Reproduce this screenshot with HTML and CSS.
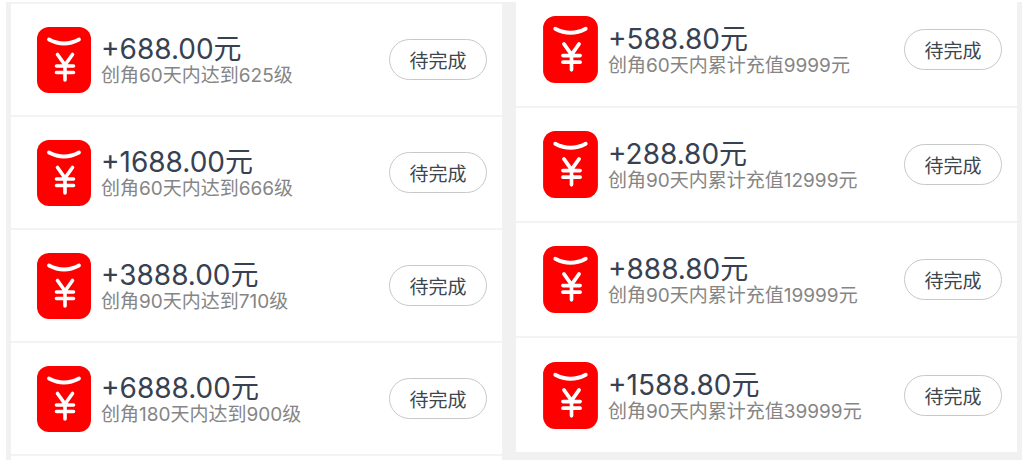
FILE: index.html
```
<!DOCTYPE html>
<html lang="zh-CN">
<head>
    <meta charset="UTF-8">
    <meta name="viewport" content="width=device-width, initial-scale=1.0">
    <title>创角红包任务</title>
    <link rel="stylesheet" href="styles.css">
</head>
<body>
    <!-- Red packet icon, reused by every task -->
    <svg class="sprite" width="0" height="0" aria-hidden="true">
        <symbol id="packet" viewBox="0 0 54 66">
            <rect width="54" height="66" rx="12" fill="#fe0000"/>
            <g fill="none" stroke="#fff" stroke-linecap="round" stroke-linejoin="round">
                <path d="M12 12.500 Q27 20.500 42 12.500" stroke-width="3.8"/>
                <path d="M20.500 27.500 L28 38 L35.500 27.500 M28 38 V53 M19.500 39 H36.500 M19.500 45.500 H36.500" stroke-width="3.6"/>
            </g>
        </symbol>
    </svg>

    <main class="board">
        <ul class="panel level">
            <li class="task">
                <svg class="icon" aria-hidden="true"><use href="#packet"/></svg>
                <div class="info">
                    <h3>+688.00元</h3>
                    <p>创角60天内达到625级</p>
                </div>
                <button type="button">待完成</button>
            </li>
            <li class="task">
                <svg class="icon" aria-hidden="true"><use href="#packet"/></svg>
                <div class="info">
                    <h3>+1688.00元</h3>
                    <p>创角60天内达到666级</p>
                </div>
                <button type="button">待完成</button>
            </li>
            <li class="task">
                <svg class="icon" aria-hidden="true"><use href="#packet"/></svg>
                <div class="info">
                    <h3>+3888.00元</h3>
                    <p>创角90天内达到710级</p>
                </div>
                <button type="button">待完成</button>
            </li>
            <li class="task">
                <svg class="icon" aria-hidden="true"><use href="#packet"/></svg>
                <div class="info">
                    <h3>+6888.00元</h3>
                    <p>创角180天内达到900级</p>
                </div>
                <button type="button">待完成</button>
            </li>
        </ul>

        <ul class="panel recharge">
            <li class="task">
                <svg class="icon" aria-hidden="true"><use href="#packet"/></svg>
                <div class="info">
                    <h3>+588.80元</h3>
                    <p>创角60天内累计充值9999元</p>
                </div>
                <button type="button">待完成</button>
            </li>
            <li class="task">
                <svg class="icon" aria-hidden="true"><use href="#packet"/></svg>
                <div class="info">
                    <h3>+288.80元</h3>
                    <p>创角90天内累计充值12999元</p>
                </div>
                <button type="button">待完成</button>
            </li>
            <li class="task">
                <svg class="icon" aria-hidden="true"><use href="#packet"/></svg>
                <div class="info">
                    <h3>+888.80元</h3>
                    <p>创角90天内累计充值19999元</p>
                </div>
                <button type="button">待完成</button>
            </li>
            <li class="task">
                <svg class="icon" aria-hidden="true"><use href="#packet"/></svg>
                <div class="info">
                    <h3>+1588.80元</h3>
                    <p>创角90天内累计充值39999元</p>
                </div>
                <button type="button">待完成</button>
            </li>
        </ul>
    </main>
</body>
</html>
```
FILE: styles.css
```
* {
    box-sizing: border-box;
}
body {
    font-family: Inter, "Noto Sans CJK SC", sans-serif;
    margin: 0;
    padding: 2px 3px 0 6px;
    min-height: 100vh;
    display: flex;
    background-color: #fff;
}
.sprite {
    position: absolute;
}
.board {
    flex: 1;
    display: grid;
    grid-template-columns: 491fr 501fr;
    gap: 14px;
    padding: 0 5px;
    background-color: #f1f1f1;
}
.panel {
    list-style: none;
    margin: 0;
    padding: 0;
    background-color: #fff;
}
.level {
    border-top: 2px solid #f3f3f3;
}
.recharge {
    align-self: start;
}
.task {
    display: flex;
    align-items: center;
    gap: 10px;
    height: 113px;
    padding: 0 15px 0 26px;
    border-bottom: 2px solid #f3f3f3;
}
.recharge .task {
    height: 115px;
    padding-left: 27px;
}
.recharge .task:first-child {
    height: 106px;
    padding-bottom: 9px;
}
.recharge .task:last-child {
    height: 114px;
    border-bottom: none;
}
.icon {
    width: 54px;
    height: 66px;
}
.recharge .icon {
    width: 55px;
    height: 67px;
}
.info {
    flex: 1;
    padding-top: 3px;
}
h3 {
    margin: 0;
    font-size: 28px;
    font-weight: 400;
    line-height: 30px;
    color: #374151;
}
p {
    margin: 0;
    font-size: 19px;
    line-height: 24px;
    color: #858585;
}
button {
    width: 98px;
    height: 41px;
    padding: 0;
    border: 1px solid #c8c8c8;
    border-radius: 21px;
    background-color: #fff;
    color: #3d464d;
    font-family: inherit;
    font-size: 19px;
}
```
